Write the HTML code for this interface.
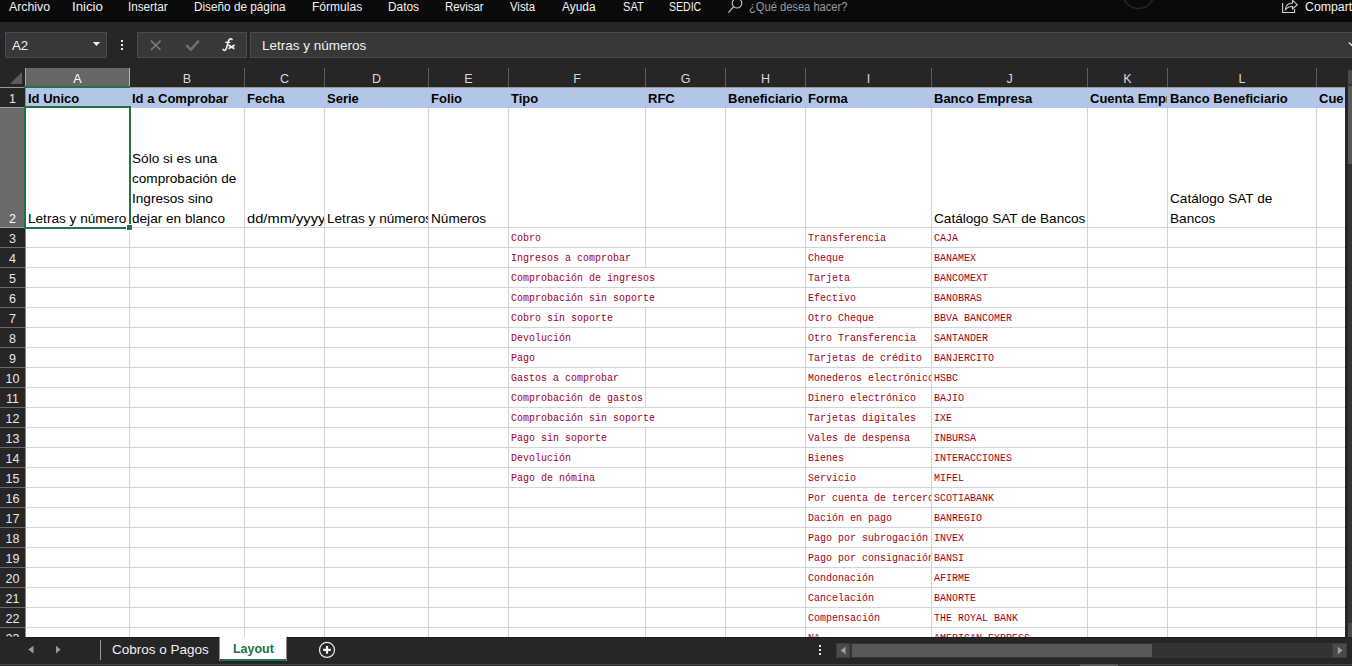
<!DOCTYPE html>
<html><head><meta charset="utf-8"><style>
*{margin:0;padding:0;box-sizing:border-box}
html,body{width:1352px;height:666px;overflow:hidden;background:#262626;font-family:"Liberation Sans",sans-serif}
.a{position:absolute}
.menu{position:absolute;top:0;left:0;width:1352px;height:22px;background:#0a0a0a}
.mi{position:absolute;top:-1px;font-size:12.3px;line-height:16px;color:#f2f2f2;white-space:nowrap}
.hdr{position:absolute;top:70px;height:18px;color:#d9d9d9;font-size:12.5px;line-height:18px;text-align:center}
.vl{position:absolute;width:1px}
.hl{position:absolute;height:1px}
.c{position:absolute;overflow:hidden;white-space:nowrap;font-size:13.6px;color:#000}
.m{position:absolute;white-space:nowrap;overflow:hidden;font-family:"Liberation Mono",monospace;font-size:10px;color:#a3001a;line-height:12px}
.rn{position:absolute;left:0;width:25px;text-align:center;color:#e6e6e6;font-size:12.5px;line-height:14px}
</style></head><body>

<div class="menu">
<div class="mi" style="left:9px;transform:scaleX(1);transform-origin:0 0">Archivo</div>
<div class="mi" style="left:72px;transform:scaleX(1.077);transform-origin:0 0">Inicio</div>
<div class="mi" style="left:128px;transform:scaleX(0.95);transform-origin:0 0">Insertar</div>
<div class="mi" style="left:194px;transform:scaleX(0.957);transform-origin:0 0">Diseño de página</div>
<div class="mi" style="left:312px;transform:scaleX(0.98);transform-origin:0 0">Fórmulas</div>
<div class="mi" style="left:388px;transform:scaleX(0.967);transform-origin:0 0">Datos</div>
<div class="mi" style="left:445px;transform:scaleX(0.925);transform-origin:0 0">Revisar</div>
<div class="mi" style="left:510px;transform:scaleX(0.923);transform-origin:0 0">Vista</div>
<div class="mi" style="left:562px;transform:scaleX(0.97);transform-origin:0 0">Ayuda</div>
<div class="mi" style="left:623px;transform:scaleX(0.905);transform-origin:0 0">SAT</div>
<div class="mi" style="left:669px;transform:scaleX(0.857);transform-origin:0 0">SEDIC</div>
<div class="mi" style="left:749px;color:#9a9a9a;transform:scaleX(0.906);transform-origin:0 0">¿Qué desea hacer?</div>
<svg class="a" style="left:726px;top:0" width="20" height="16"><circle cx="11" cy="3.2" r="4.8" fill="none" stroke="#bdbdbd" stroke-width="1.2"/><line x1="7.6" y1="6.8" x2="2.4" y2="12.6" stroke="#bdbdbd" stroke-width="1.3"/></svg>
<svg class="a" style="left:1100px;top:0" width="80" height="22"><circle cx="38.5" cy="-7" r="15.5" fill="none" stroke="#262626" stroke-width="1.6"/></svg>
<svg class="a" style="left:1280px;top:0" width="20" height="16"><path d="M2.6 3 V12.5 H14.6 V9" fill="none" stroke="#d0d0d0" stroke-width="1.1"/><path d="M5.3 9.6 C5.8 5.5 8.5 3 12.5 3 V0.4 L17.3 4.7 L12.5 9 V6.4 C9.5 6.4 7 7.5 5.3 9.6 Z" fill="none" stroke="#d0d0d0" stroke-width="1.05" stroke-linejoin="miter"/></svg>
<div class="mi" style="left:1305px;color:#f2f2f2">Compartir</div>
</div>
<div class="a" style="left:5px;top:32px;width:102px;height:26px;background:#383838;border:1px solid #4a4a4a"></div>
<div class="a" style="left:12px;top:38px;font-size:13.3px;line-height:16px;color:#f0f0f0">A2</div>
<svg class="a" style="left:92px;top:41px" width="10" height="6"><path d="M0.8 0.9 H8.2 L4.5 5.1 Z" fill="#f0f0f0"/></svg>
<div class="a" style="left:121px;top:40px;width:2px;height:2px;background:#f0f0f0"></div>
<div class="a" style="left:121px;top:44px;width:2px;height:2px;background:#f0f0f0"></div>
<div class="a" style="left:121px;top:48px;width:2px;height:2px;background:#f0f0f0"></div>
<div class="a" style="left:137px;top:32px;width:110px;height:26px;background:#383838;border:1px solid #4a4a4a"></div>
<svg class="a" style="left:148px;top:38px" width="16" height="14"><path d="M2.9 2.6 L12.6 12 M12.6 2.6 L2.9 12" stroke="#7a7a7a" stroke-width="1.7"/></svg>
<svg class="a" style="left:184px;top:38px" width="18" height="14"><path d="M2.2 7.2 L6.8 11.6 L14.8 2.6" fill="none" stroke="#6e6e6e" stroke-width="2.5"/></svg>
<svg class="a" style="left:218.5px;top:36px" width="20" height="18"><path d="M4.2 13.4 C4.8 14.8 6.6 14.8 7.2 12.8 L9.6 4.8 C10.2 2.8 11.8 2.3 13 3.4" fill="none" stroke="#f2f2f2" stroke-width="1.6" stroke-linecap="round"/><path d="M6.2 6.3 H11.2" stroke="#f2f2f2" stroke-width="1.3"/><path d="M9.4 9 L15.4 12.8 M15.6 9 L9.6 12.8" stroke="#f2f2f2" stroke-width="1.6"/></svg>
<div class="a" style="left:250px;top:32px;width:1110px;height:26px;background:#383838;border:1px solid #4a4a4a"></div>
<div class="a" style="left:262px;top:38px;font-size:13.5px;line-height:16px;color:#f0f0f0">Letras y números</div>
<svg class="a" style="left:1348px;top:41px" width="10" height="8"><path d="M1 1.5 L4.5 5 L8 1.5" fill="none" stroke="#e6e6e6" stroke-width="1.5"/></svg>
<div class="a" style="left:0;top:68px;width:1345px;height:19px;background:#262626"></div>
<svg class="a" style="left:9px;top:71px" width="15" height="15"><path d="M1 13 L13 1 V13 Z" fill="#5c5c5c"/></svg>
<div class="hl" style="left:0;top:87px;width:1345px;background:#9a9a9a"></div>
<div class="a" style="left:25px;top:68px;width:105px;height:18px;background:#676767;border-left:1px solid #a8a8a8;border-right:1px solid #b4b4b4"></div>
<div class="a" style="left:24px;top:86px;width:106px;height:2px;background:#217346"></div>
<div class="hdr" style="left:26px;width:103px;color:#fff">A</div>
<div class="hdr" style="left:130px;width:114px;">B</div>
<div class="vl" style="left:244px;top:68px;height:19px;background:#5e5e5e"></div>
<div class="hdr" style="left:245px;width:79px;">C</div>
<div class="vl" style="left:324px;top:68px;height:19px;background:#5e5e5e"></div>
<div class="hdr" style="left:325px;width:103px;">D</div>
<div class="vl" style="left:428px;top:68px;height:19px;background:#5e5e5e"></div>
<div class="hdr" style="left:429px;width:79px;">E</div>
<div class="vl" style="left:508px;top:68px;height:19px;background:#5e5e5e"></div>
<div class="hdr" style="left:509px;width:136px;">F</div>
<div class="vl" style="left:645px;top:68px;height:19px;background:#5e5e5e"></div>
<div class="hdr" style="left:646px;width:79px;">G</div>
<div class="vl" style="left:725px;top:68px;height:19px;background:#5e5e5e"></div>
<div class="hdr" style="left:726px;width:79px;">H</div>
<div class="vl" style="left:805px;top:68px;height:19px;background:#5e5e5e"></div>
<div class="hdr" style="left:806px;width:125px;">I</div>
<div class="vl" style="left:931px;top:68px;height:19px;background:#5e5e5e"></div>
<div class="hdr" style="left:932px;width:155px;">J</div>
<div class="vl" style="left:1087px;top:68px;height:19px;background:#5e5e5e"></div>
<div class="hdr" style="left:1088px;width:79px;">K</div>
<div class="vl" style="left:1167px;top:68px;height:19px;background:#5e5e5e"></div>
<div class="hdr" style="left:1168px;width:148px;">L</div>
<div class="vl" style="left:1316px;top:68px;height:19px;background:#5e5e5e"></div>
<div class="vl" style="left:1345px;top:68px;height:19px;background:#5e5e5e"></div>
<div class="a" style="left:26px;top:88px;width:1319px;height:549px;background:#fff"></div>
<div class="a" style="left:0;top:88px;width:25px;height:549px;background:#262626"></div>
<div class="vl" style="left:25px;top:88px;height:549px;background:#8a8a8a"></div>
<div class="a" style="left:0;top:108px;width:24px;height:119px;background:#6a6a6a"></div>
<div class="hl" style="left:26px;top:227px;width:1319px;background:#d4d4d4"></div>
<div class="hl" style="left:0;top:227px;width:25px;background:#6a6a6e"></div>
<div class="hl" style="left:26px;top:247px;width:1319px;background:#d4d4d4"></div>
<div class="hl" style="left:0;top:247px;width:25px;background:#6a6a6e"></div>
<div class="hl" style="left:26px;top:267px;width:1319px;background:#d4d4d4"></div>
<div class="hl" style="left:0;top:267px;width:25px;background:#6a6a6e"></div>
<div class="hl" style="left:26px;top:287px;width:1319px;background:#d4d4d4"></div>
<div class="hl" style="left:0;top:287px;width:25px;background:#6a6a6e"></div>
<div class="hl" style="left:26px;top:307px;width:1319px;background:#d4d4d4"></div>
<div class="hl" style="left:0;top:307px;width:25px;background:#6a6a6e"></div>
<div class="hl" style="left:26px;top:327px;width:1319px;background:#d4d4d4"></div>
<div class="hl" style="left:0;top:327px;width:25px;background:#6a6a6e"></div>
<div class="hl" style="left:26px;top:347px;width:1319px;background:#d4d4d4"></div>
<div class="hl" style="left:0;top:347px;width:25px;background:#6a6a6e"></div>
<div class="hl" style="left:26px;top:367px;width:1319px;background:#d4d4d4"></div>
<div class="hl" style="left:0;top:367px;width:25px;background:#6a6a6e"></div>
<div class="hl" style="left:26px;top:387px;width:1319px;background:#d4d4d4"></div>
<div class="hl" style="left:0;top:387px;width:25px;background:#6a6a6e"></div>
<div class="hl" style="left:26px;top:407px;width:1319px;background:#d4d4d4"></div>
<div class="hl" style="left:0;top:407px;width:25px;background:#6a6a6e"></div>
<div class="hl" style="left:26px;top:427px;width:1319px;background:#d4d4d4"></div>
<div class="hl" style="left:0;top:427px;width:25px;background:#6a6a6e"></div>
<div class="hl" style="left:26px;top:447px;width:1319px;background:#d4d4d4"></div>
<div class="hl" style="left:0;top:447px;width:25px;background:#6a6a6e"></div>
<div class="hl" style="left:26px;top:467px;width:1319px;background:#d4d4d4"></div>
<div class="hl" style="left:0;top:467px;width:25px;background:#6a6a6e"></div>
<div class="hl" style="left:26px;top:487px;width:1319px;background:#d4d4d4"></div>
<div class="hl" style="left:0;top:487px;width:25px;background:#6a6a6e"></div>
<div class="hl" style="left:26px;top:507px;width:1319px;background:#d4d4d4"></div>
<div class="hl" style="left:0;top:507px;width:25px;background:#6a6a6e"></div>
<div class="hl" style="left:26px;top:527px;width:1319px;background:#d4d4d4"></div>
<div class="hl" style="left:0;top:527px;width:25px;background:#6a6a6e"></div>
<div class="hl" style="left:26px;top:547px;width:1319px;background:#d4d4d4"></div>
<div class="hl" style="left:0;top:547px;width:25px;background:#6a6a6e"></div>
<div class="hl" style="left:26px;top:567px;width:1319px;background:#d4d4d4"></div>
<div class="hl" style="left:0;top:567px;width:25px;background:#6a6a6e"></div>
<div class="hl" style="left:26px;top:587px;width:1319px;background:#d4d4d4"></div>
<div class="hl" style="left:0;top:587px;width:25px;background:#6a6a6e"></div>
<div class="hl" style="left:26px;top:607px;width:1319px;background:#d4d4d4"></div>
<div class="hl" style="left:0;top:607px;width:25px;background:#6a6a6e"></div>
<div class="hl" style="left:26px;top:627px;width:1319px;background:#d4d4d4"></div>
<div class="hl" style="left:0;top:627px;width:25px;background:#6a6a6e"></div>
<div class="hl" style="left:0;top:107px;width:25px;background:#a0a0a0"></div>
<div class="hl" style="left:0;top:227px;width:25px;background:#a0a0a0"></div>
<div class="vl" style="left:129px;top:108px;height:529px;background:#d4d4d4"></div>
<div class="vl" style="left:244px;top:108px;height:529px;background:#d4d4d4"></div>
<div class="vl" style="left:324px;top:108px;height:529px;background:#d4d4d4"></div>
<div class="vl" style="left:428px;top:108px;height:529px;background:#d4d4d4"></div>
<div class="vl" style="left:508px;top:108px;height:529px;background:#d4d4d4"></div>
<div class="vl" style="left:645px;top:108px;height:120px;background:#d4d4d4"></div>
<div class="vl" style="left:645px;top:228px;height:20px;background:#d4d4d4"></div>
<div class="vl" style="left:645px;top:248px;height:20px;background:#d4d4d4"></div>
<div class="vl" style="left:645px;top:308px;height:20px;background:#d4d4d4"></div>
<div class="vl" style="left:645px;top:328px;height:20px;background:#d4d4d4"></div>
<div class="vl" style="left:645px;top:348px;height:20px;background:#d4d4d4"></div>
<div class="vl" style="left:645px;top:368px;height:20px;background:#d4d4d4"></div>
<div class="vl" style="left:645px;top:388px;height:20px;background:#d4d4d4"></div>
<div class="vl" style="left:645px;top:428px;height:20px;background:#d4d4d4"></div>
<div class="vl" style="left:645px;top:448px;height:20px;background:#d4d4d4"></div>
<div class="vl" style="left:645px;top:468px;height:20px;background:#d4d4d4"></div>
<div class="vl" style="left:645px;top:488px;height:20px;background:#d4d4d4"></div>
<div class="vl" style="left:645px;top:508px;height:20px;background:#d4d4d4"></div>
<div class="vl" style="left:645px;top:528px;height:20px;background:#d4d4d4"></div>
<div class="vl" style="left:645px;top:548px;height:20px;background:#d4d4d4"></div>
<div class="vl" style="left:645px;top:568px;height:20px;background:#d4d4d4"></div>
<div class="vl" style="left:645px;top:588px;height:20px;background:#d4d4d4"></div>
<div class="vl" style="left:645px;top:608px;height:20px;background:#d4d4d4"></div>
<div class="vl" style="left:645px;top:628px;height:9px;background:#d4d4d4"></div>
<div class="vl" style="left:725px;top:108px;height:529px;background:#d4d4d4"></div>
<div class="vl" style="left:805px;top:108px;height:529px;background:#d4d4d4"></div>
<div class="vl" style="left:931px;top:108px;height:529px;background:#d4d4d4"></div>
<div class="vl" style="left:1087px;top:108px;height:529px;background:#d4d4d4"></div>
<div class="vl" style="left:1167px;top:108px;height:529px;background:#d4d4d4"></div>
<div class="vl" style="left:1316px;top:108px;height:529px;background:#d4d4d4"></div>
<div class="a" style="left:26px;top:88px;width:1319px;height:20px;background:#b4c6e7"></div>
<div class="c" style="left:26px;top:88px;width:103px;height:19px;font-weight:bold;font-size:13px;line-height:19px;padding-left:2px;padding-top:1px">Id Unico</div>
<div class="c" style="left:130px;top:88px;width:114px;height:19px;font-weight:bold;font-size:13px;line-height:19px;padding-left:2px;padding-top:1px">Id a Comprobar</div>
<div class="c" style="left:245px;top:88px;width:79px;height:19px;font-weight:bold;font-size:13px;line-height:19px;padding-left:2px;padding-top:1px">Fecha</div>
<div class="c" style="left:325px;top:88px;width:103px;height:19px;font-weight:bold;font-size:13px;line-height:19px;padding-left:2px;padding-top:1px">Serie</div>
<div class="c" style="left:429px;top:88px;width:79px;height:19px;font-weight:bold;font-size:13px;line-height:19px;padding-left:2px;padding-top:1px">Folio</div>
<div class="c" style="left:509px;top:88px;width:136px;height:19px;font-weight:bold;font-size:13px;line-height:19px;padding-left:2px;padding-top:1px">Tipo</div>
<div class="c" style="left:646px;top:88px;width:79px;height:19px;font-weight:bold;font-size:13px;line-height:19px;padding-left:2px;padding-top:1px">RFC</div>
<div class="c" style="left:726px;top:88px;width:79px;height:19px;font-weight:bold;font-size:13px;line-height:19px;padding-left:2px;padding-top:1px">Beneficiario</div>
<div class="c" style="left:806px;top:88px;width:125px;height:19px;font-weight:bold;font-size:13px;line-height:19px;padding-left:2px;padding-top:1px">Forma</div>
<div class="c" style="left:932px;top:88px;width:155px;height:19px;font-weight:bold;font-size:13px;line-height:19px;padding-left:2px;padding-top:1px">Banco Empresa</div>
<div class="c" style="left:1088px;top:88px;width:79px;height:19px;font-weight:bold;font-size:13px;line-height:19px;padding-left:2px;padding-top:1px">Cuenta Empresa</div>
<div class="c" style="left:1168px;top:88px;width:148px;height:19px;font-weight:bold;font-size:13px;line-height:19px;padding-left:2px;padding-top:1px">Banco Beneficiario</div>
<div class="c" style="left:1317px;top:88px;width:28px;height:19px;font-weight:bold;font-size:13px;line-height:19px;padding-left:2px;padding-top:1px">Cue</div>
<div class="c" style="left:26px;top:209px;width:101px;height:20px;line-height:20px;padding-left:2px">Letras y números</div>
<div class="c" style="left:130px;top:149px;width:114px;height:80px;line-height:20px;padding-left:2px">Sólo si es una<br>comprobación de<br>Ingresos sino<br>dejar en blanco</div>
<div class="c" style="left:245px;top:209px;width:79px;height:20px;line-height:20px;padding-left:2px"><span style="display:inline-block;transform:scaleX(1.08);transform-origin:0 0">dd/mm/yyyy</span></div>
<div class="c" style="left:325px;top:209px;width:103px;height:20px;line-height:20px;padding-left:2px">Letras y números</div>
<div class="c" style="left:429px;top:209px;width:79px;height:20px;line-height:20px;padding-left:2px">Números</div>
<div class="c" style="left:932px;top:209px;width:155px;height:20px;line-height:20px;padding-left:2px">Catálogo SAT de Bancos</div>
<div class="c" style="left:1168px;top:189px;width:148px;height:40px;line-height:20px;padding-left:2px">Catálogo SAT de<br>Bancos</div>
<div class="m" style="left:511px;top:233px;width:298px;height:14px">Cobro</div>
<div class="m" style="left:511px;top:253px;width:298px;height:14px">Ingresos a comprobar</div>
<div class="m" style="left:511px;top:273px;width:298px;height:14px">Comprobación de ingresos</div>
<div class="m" style="left:511px;top:293px;width:298px;height:14px">Comprobación sin soporte</div>
<div class="m" style="left:511px;top:313px;width:298px;height:14px">Cobro sin soporte</div>
<div class="m" style="left:511px;top:333px;width:298px;height:14px">Devolución</div>
<div class="m" style="left:511px;top:353px;width:298px;height:14px">Pago</div>
<div class="m" style="left:511px;top:373px;width:298px;height:14px">Gastos a comprobar</div>
<div class="m" style="left:511px;top:393px;width:298px;height:14px">Comprobación de gastos</div>
<div class="m" style="left:511px;top:413px;width:298px;height:14px">Comprobación sin soporte</div>
<div class="m" style="left:511px;top:433px;width:298px;height:14px">Pago sin soporte</div>
<div class="m" style="left:511px;top:453px;width:298px;height:14px">Devolución</div>
<div class="m" style="left:511px;top:473px;width:298px;height:14px">Pago de nómina</div>
<div class="m" style="left:808px;top:233px;width:123px;height:14px">Transferencia</div>
<div class="m" style="left:808px;top:253px;width:123px;height:14px">Cheque</div>
<div class="m" style="left:808px;top:273px;width:123px;height:14px">Tarjeta</div>
<div class="m" style="left:808px;top:293px;width:123px;height:14px">Efectivo</div>
<div class="m" style="left:808px;top:313px;width:123px;height:14px">Otro Cheque</div>
<div class="m" style="left:808px;top:333px;width:123px;height:14px">Otro Transferencia</div>
<div class="m" style="left:808px;top:353px;width:123px;height:14px">Tarjetas de crédito</div>
<div class="m" style="left:808px;top:373px;width:123px;height:14px">Monederos electrónicos</div>
<div class="m" style="left:808px;top:393px;width:123px;height:14px">Dinero electrónico</div>
<div class="m" style="left:808px;top:413px;width:123px;height:14px">Tarjetas digitales</div>
<div class="m" style="left:808px;top:433px;width:123px;height:14px">Vales de despensa</div>
<div class="m" style="left:808px;top:453px;width:123px;height:14px">Bienes</div>
<div class="m" style="left:808px;top:473px;width:123px;height:14px">Servicio</div>
<div class="m" style="left:808px;top:493px;width:123px;height:14px">Por cuenta de tercero</div>
<div class="m" style="left:808px;top:513px;width:123px;height:14px">Dación en pago</div>
<div class="m" style="left:808px;top:533px;width:123px;height:14px">Pago por subrogación</div>
<div class="m" style="left:808px;top:553px;width:123px;height:14px">Pago por consignación</div>
<div class="m" style="left:808px;top:573px;width:123px;height:14px">Condonación</div>
<div class="m" style="left:808px;top:593px;width:123px;height:14px">Cancelación</div>
<div class="m" style="left:808px;top:613px;width:123px;height:14px">Compensación</div>
<div class="m" style="left:808px;top:633px;width:123px;height:4px">NA</div>
<div class="m" style="left:934px;top:233px;width:153px;height:14px">CAJA</div>
<div class="m" style="left:934px;top:253px;width:153px;height:14px">BANAMEX</div>
<div class="m" style="left:934px;top:273px;width:153px;height:14px">BANCOMEXT</div>
<div class="m" style="left:934px;top:293px;width:153px;height:14px">BANOBRAS</div>
<div class="m" style="left:934px;top:313px;width:153px;height:14px">BBVA BANCOMER</div>
<div class="m" style="left:934px;top:333px;width:153px;height:14px">SANTANDER</div>
<div class="m" style="left:934px;top:353px;width:153px;height:14px">BANJERCITO</div>
<div class="m" style="left:934px;top:373px;width:153px;height:14px">HSBC</div>
<div class="m" style="left:934px;top:393px;width:153px;height:14px">BAJIO</div>
<div class="m" style="left:934px;top:413px;width:153px;height:14px">IXE</div>
<div class="m" style="left:934px;top:433px;width:153px;height:14px">INBURSA</div>
<div class="m" style="left:934px;top:453px;width:153px;height:14px">INTERACCIONES</div>
<div class="m" style="left:934px;top:473px;width:153px;height:14px">MIFEL</div>
<div class="m" style="left:934px;top:493px;width:153px;height:14px">SCOTIABANK</div>
<div class="m" style="left:934px;top:513px;width:153px;height:14px">BANREGIO</div>
<div class="m" style="left:934px;top:533px;width:153px;height:14px">INVEX</div>
<div class="m" style="left:934px;top:553px;width:153px;height:14px">BANSI</div>
<div class="m" style="left:934px;top:573px;width:153px;height:14px">AFIRME</div>
<div class="m" style="left:934px;top:593px;width:153px;height:14px">BANORTE</div>
<div class="m" style="left:934px;top:613px;width:153px;height:14px">THE ROYAL BANK</div>
<div class="m" style="left:934px;top:633px;width:153px;height:4px">AMERICAN EXPRESS</div>
<div class="a" style="left:24px;top:106px;width:107px;height:2px;background:#217346"></div>
<div class="a" style="left:24px;top:106px;width:2px;height:123px;background:#217346"></div>
<div class="a" style="left:129px;top:106px;width:2px;height:118px;background:#217346"></div>
<div class="a" style="left:24px;top:227px;width:102px;height:2px;background:#217346"></div>
<div class="a" style="left:126px;top:224px;width:7px;height:7px;background:#fff"></div>
<div class="a" style="left:127px;top:225px;width:5px;height:5px;background:#217346"></div>
<div class="rn" style="top:92px;color:#e6e6e6">1</div>
<div class="rn" style="top:212px;color:#fff">2</div>
<div class="rn" style="top:232px;color:#e6e6e6">3</div>
<div class="rn" style="top:252px;color:#e6e6e6">4</div>
<div class="rn" style="top:272px;color:#e6e6e6">5</div>
<div class="rn" style="top:292px;color:#e6e6e6">6</div>
<div class="rn" style="top:312px;color:#e6e6e6">7</div>
<div class="rn" style="top:332px;color:#e6e6e6">8</div>
<div class="rn" style="top:352px;color:#e6e6e6">9</div>
<div class="rn" style="top:372px;color:#e6e6e6">10</div>
<div class="rn" style="top:392px;color:#e6e6e6">11</div>
<div class="rn" style="top:412px;color:#e6e6e6">12</div>
<div class="rn" style="top:432px;color:#e6e6e6">13</div>
<div class="rn" style="top:452px;color:#e6e6e6">14</div>
<div class="rn" style="top:472px;color:#e6e6e6">15</div>
<div class="rn" style="top:492px;color:#e6e6e6">16</div>
<div class="rn" style="top:512px;color:#e6e6e6">17</div>
<div class="rn" style="top:532px;color:#e6e6e6">18</div>
<div class="rn" style="top:552px;color:#e6e6e6">19</div>
<div class="rn" style="top:572px;color:#e6e6e6">20</div>
<div class="rn" style="top:592px;color:#e6e6e6">21</div>
<div class="rn" style="top:612px;color:#e6e6e6">22</div>
<div class="rn" style="top:632px;color:#e6e6e6">23</div>
<div class="a" style="left:0;top:637px;width:1352px;height:29px;background:#262626"></div>
<div class="hl" style="left:0;top:637px;width:1345px;background:#1c1c1c"></div>
<div class="a" style="left:1345px;top:68px;width:7px;height:569px;background:#262626"></div>
<div class="a" style="left:1348px;top:70px;width:4px;height:567px;background:#333"></div>
<div class="a" style="left:1348px;top:86px;width:4px;height:78px;background:#585858"></div>
<div class="a" style="left:1348px;top:70px;width:4px;height:14px;background:#4a4a4a"></div>
<div class="a" style="left:1348px;top:623px;width:4px;height:14px;background:#4a4a4a"></div>
<svg class="a" style="left:26px;top:644px" width="10" height="12"><path d="M7.5 1.8 V9.5 L2.2 5.6 Z" fill="#9a9a9a"/></svg>
<svg class="a" style="left:54px;top:644px" width="10" height="12"><path d="M2 1.8 V9.5 L6.6 5.6 Z" fill="#9a9a9a"/></svg>
<div class="a" style="left:100px;top:640px;width:1px;height:20px;background:#9a9a9a"></div>
<div class="a" style="left:112px;top:642px;font-size:13.5px;line-height:16px;color:#f0f0f0">Cobros o Pagos</div>
<div class="a" style="left:219px;top:637px;width:68px;height:24px;background:#fff;border-left:1px solid #8a8a8a;border-right:1px solid #8a8a8a"></div>
<div class="a" style="left:220px;top:659px;width:66px;height:2px;background:#217346"></div>
<div class="a" style="left:233px;top:641px;font-size:13.4px;line-height:16px;color:#217346;font-weight:bold;transform:scaleX(0.93);transform-origin:0 0">Layout</div>
<svg class="a" style="left:317px;top:640px" width="20" height="20"><circle cx="10" cy="9.9" r="7.5" fill="none" stroke="#e6e6e6" stroke-width="1.3"/><path d="M10 6 V13.8 M6.1 9.9 H13.9" stroke="#f0f0f0" stroke-width="2.2"/></svg>
<div class="a" style="left:819px;top:645px;width:2px;height:2px;background:#e6e6e6"></div>
<div class="a" style="left:819px;top:649px;width:2px;height:2px;background:#e6e6e6"></div>
<div class="a" style="left:819px;top:653px;width:2px;height:2px;background:#e6e6e6"></div>
<div class="a" style="left:836px;top:643px;width:511px;height:15px;background:#333"></div>
<div class="a" style="left:836px;top:643px;width:14px;height:15px;background:#4a4a4a;border:1px solid #3d3d3d"></div>
<svg class="a" style="left:836px;top:643px" width="14" height="15"><path d="M9.5 3.8 V11.2 L4.6 7.5 Z" fill="#a0a0a0"/></svg>
<div class="a" style="left:852px;top:644px;width:300px;height:13px;background:#585858"></div>
<div class="a" style="left:1332px;top:643px;width:15px;height:15px;background:#4a4a4a;border:1px solid #3d3d3d"></div>
<svg class="a" style="left:1332px;top:643px" width="15" height="15"><path d="M5.8 3.8 V11.2 L10.6 7.5 Z" fill="#a0a0a0"/></svg>
<div class="a" style="left:0;top:664px;width:1352px;height:1px;background:#474747"></div>
<div class="a" style="left:1080px;top:664px;width:38px;height:2px;background:#585858"></div>
</body></html>
